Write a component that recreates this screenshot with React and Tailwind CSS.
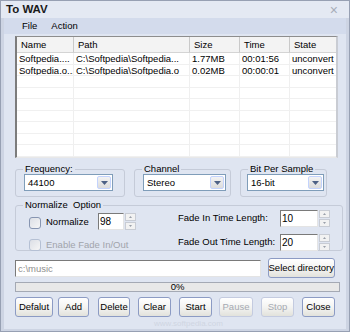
import React from "react";

const font = { fontFamily: '"Liberation Sans", Arial, sans-serif' };

function Arrow({ color = "#4d6185" }) {
  return (
    <svg width="7" height="4" viewBox="0 0 7 4">
      <path d="M0 0h7L3.5 4z" fill={color} />
    </svg>
  );
}

function Combo({ value, w }) {
  return (
    <div className={`flex h-[17px] ${w} border border-[#7f9db9] bg-white`}>
      <div className="flex-1 pl-[3px] text-[9.5px] leading-[15px] text-black">{value}</div>
      <div className="m-[1px] flex w-[14px] items-center justify-center rounded-[2px] border border-[#c3d3fd] bg-gradient-to-b from-[#f3f3f3] to-[#dcdcdc]">
        <Arrow />
      </div>
    </div>
  );
}

function Spin() {
  return (
    <div className="ml-[1px] flex h-[17px] w-[11px] flex-col gap-[1px]">
      <div className="flex flex-1 items-center justify-center border border-[#c8ccd4] bg-[#f2f2f2]">
        <svg width="3" height="2" viewBox="0 0 3 2"><path d="M0 2h3L1.5 0z" fill="#9aa0aa" /></svg>
      </div>
      <div className="flex flex-1 items-center justify-center border border-[#c8ccd4] bg-[#f2f2f2]">
        <svg width="3" height="2" viewBox="0 0 3 2"><path d="M0 0h3L1.5 2z" fill="#9aa0aa" /></svg>
      </div>
    </div>
  );
}

function Num({ value, w }) {
  return (
    <div className="flex items-center">
      <div className={`h-[17px] ${w} border border-[#7a7a7a] border-r-[#e4e4e4] border-b-[#e4e4e4] bg-white pl-[1px] text-[10px] leading-[15px]`}>
        {value}
      </div>
      <Spin />
    </div>
  );
}

function Check({ label, disabled }) {
  return (
    <div className="flex items-center gap-[5px]">
      <div className={`h-[12px] w-[12px] shrink-0 rounded-[3px] border ${disabled ? "border-[#b5c0d4]" : "border-[#8795b1]"} bg-gradient-to-br from-[#dcdfe6] to-[#f6f6f6]`} />
      <span className={`whitespace-nowrap text-[9.5px] ${disabled ? "text-[#a1a4ab]" : "text-black"}`}>{label}</span>
    </div>
  );
}

function Btn({ label, w, disabled }) {
  return (
    <div
      className={`flex h-[20px] ${w} items-center justify-center whitespace-nowrap rounded-[3px] border ${disabled ? "border-[#c4cbe0] text-[#a5a9b2]" : "border-[#8c9bc4] text-black"} bg-gradient-to-b from-[#ffffff] via-[#f4f4f2] to-[#e2e2dc] text-[9.5px]`}
    >
      {label}
    </div>
  );
}

function Group({ label, className, inner, children }) {
  return (
    <fieldset className={`rounded-[3px] border border-[#c5cbd8] ${className}`}>
      <legend className="ml-[7px] whitespace-pre px-[2px] text-[9.5px] leading-[10px] text-black">{label}</legend>
      <div className={inner}>{children}</div>
    </fieldset>
  );
}

const cols = [
  { w: "w-[57px]", h: "Name" },
  { w: "w-[116px]", h: "Path" },
  { w: "w-[50px]", h: "Size" },
  { w: "w-[50px]", h: "Time" },
  { w: "w-[48px]", h: "State" },
];

const rows = [
  ["Softpedia....", "C:\\Softpedia\\Softpedia...", "1.77MB", "00:01:56", "unconvert"],
  ["Softpedia.o...", "C:\\Softpedia\\Softpedia.o", "0.02MB", "00:00:01", "unconvert"],
];

export default function App() {
  return (
    <div
      style={font}
      className="relative flex h-[332px] w-[350px] flex-col overflow-hidden border border-[#97a0b3] bg-[#dfe5f1] text-[9.5px] text-black"
    >
      {/* title */}
      <div className="flex h-[17px] items-center justify-between bg-[#e4e9f3] pl-[5px] pr-[11px]">
        <span className="text-[11.5px] font-bold text-[#1a1a1a]">To WAV</span>
        <span className="text-[14px] leading-none text-[#a7adb9]">×</span>
      </div>
      <div className="flex flex-1 flex-col border-x-[3px] border-b-[3px] border-[#cdd4e3]">
        {/* menu */}
        <div className="flex h-[16px] items-center gap-[14px] bg-[#d3dbec] pl-[18px] text-[9.5px]">
          <span>File</span>
          <span>Action</span>
        </div>
        <div className="flex flex-col px-[11px] pt-[2px]">
          {/* list */}
          <div className="h-[122px] w-[323px] overflow-hidden border-l-[2px] border-t-[1px] border-r-[2px] border-b-[1px] border-l-[#7c7c7c] border-t-[#8d8d8d] border-r-[#c9ccd3] border-b-[#e8e8e8] bg-white">
            <div className="flex h-[16px] bg-[#f3f3f3]">
              {cols.map((c) => (
                <div
                  key={c.h}
                  className={`${c.w} shrink-0 border-r border-b border-r-[#c9c9c9] border-b-[#d4d4d4] pl-[4px] text-[9.5px] leading-[15px]`}
                >
                  {c.h}
                </div>
              ))}
            </div>
            {Array.from({ length: 9 }).map((_, i) => (
              <div key={i} className="flex h-[11.5px] border-b border-[#f0f0f0]">
                {cols.map((c, j) => (
                  <div
                    key={j}
                    className={`${c.w} shrink-0 overflow-hidden whitespace-nowrap border-r border-[#efefef] pl-[2px] text-[9.5px] leading-[11px]`}
                  >
                    {rows[i] ? rows[i][j] : ""}
                  </div>
                ))}
              </div>
            ))}
          </div>

          {/* groups row */}
          <div className="mt-[6px] flex gap-[9px]">
            <Group label="Frequency:" className="h-[33px] w-[110px]" inner="pl-[8px]">
              <Combo value="44100" w="w-[89px]" />
            </Group>
            <Group label="Channel" className="h-[33px] w-[97px]" inner="pl-[8px]">
              <Combo value="Stereo" w="w-[83px]" />
            </Group>
            <Group label="Bit Per Sample" className="h-[33px] w-[87px]" inner="pl-[6px]">
              <Combo value="16-bit" w="w-[77px]" />
            </Group>
          </div>

          {/* normalize */}
          <Group label="Normalize  Option" className="mt-[3px] h-[51px] w-[328px]" inner="">
            <div className="flex">
              <div className="flex w-[150px] flex-col pl-[13px] pt-[3px]">
                <div className="flex items-center">
                  <div className="mt-[2px] w-[69px]">
                    <Check label="Normalize" />
                  </div>
                  <Num value="98" w="w-[26px]" />
                </div>
                <div className="mt-[8px]">
                  <Check label="Enable Fade In/Out" disabled />
                </div>
              </div>
              <div className="flex flex-col gap-[7px] pl-[12px]">
                <div className="flex items-center">
                  <span className="w-[102px] whitespace-nowrap">Fade In Time Length:</span>
                  <Num value="10" w="w-[38px]" />
                </div>
                <div className="flex items-center">
                  <span className="w-[102px] whitespace-nowrap">Fade Out Time Length:</span>
                  <Num value="20" w="w-[38px]" />
                </div>
              </div>
            </div>
          </Group>

          {/* directory */}
          <div className="mt-[7px] flex items-center gap-[7px]">
            <div className="h-[17px] w-[251px] border border-[#7a7a7a] border-r-[#e4e4e4] border-b-[#e4e4e4] bg-white pl-[2px] text-[9.5px] leading-[15px] text-[#8e8e8e]">
              c:\music
            </div>
            <Btn label="Select directory" w="w-[68px]" />
          </div>

          {/* progress */}
          <div className="mt-[4px] flex h-[10px] w-[325px] items-center justify-center border border-[#a4a9b4] bg-[#e8e8e8] text-[9.5px] leading-none">
            0%
          </div>

          {/* buttons */}
          <div className="mt-[5px] flex">
            <Btn label="Defalut" w="w-[39px]" />
            <div className="ml-[5px]"><Btn label="Add" w="w-[31px]" /></div>
            <div className="ml-[9px]"><Btn label="Delete" w="w-[32px]" /></div>
            <div className="ml-[8px]"><Btn label="Clear" w="w-[33px]" /></div>
            <div className="ml-[8px]"><Btn label="Start" w="w-[33px]" /></div>
            <div className="ml-[7px]"><Btn label="Pause" w="w-[34px]" disabled /></div>
            <div className="ml-[8px]"><Btn label="Stop" w="w-[33px]" disabled /></div>
            <div className="ml-[8px]"><Btn label="Close" w="w-[33px]" /></div>
          </div>
          <div className="mt-[2px] pl-[139px] text-[8px] leading-[10px] text-[#cfd5e2]">www.softpedia.com</div>
        </div>
      </div>
    </div>
  );
}
